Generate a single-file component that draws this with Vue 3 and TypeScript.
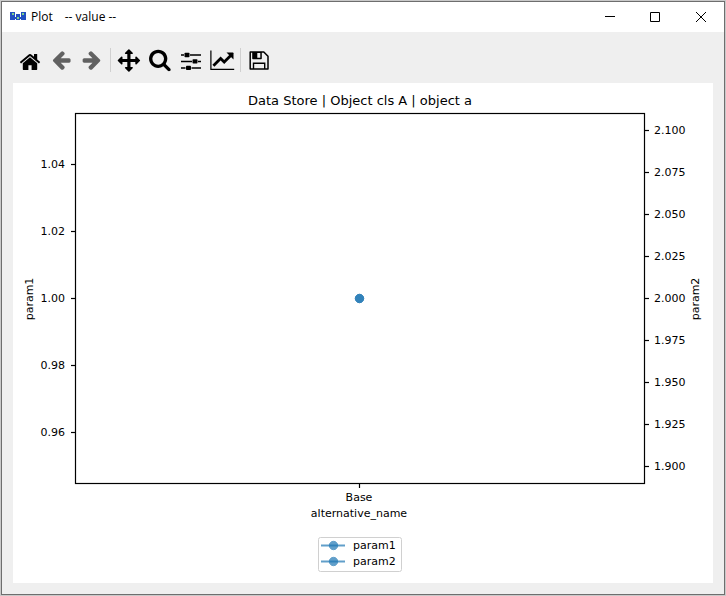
<script setup lang="ts">
interface Tick {
  label: string
  pos: number
}

interface Tool {
  id: string
  label: string
  disabled?: boolean
}

const toolGroups: Tool[][] = [
  [
    { id: 'home', label: 'Home' },
    { id: 'back', label: 'Back', disabled: true },
    { id: 'forward', label: 'Forward', disabled: true },
  ],
  [
    { id: 'pan', label: 'Pan' },
    { id: 'zoom', label: 'Zoom' },
    { id: 'subplots', label: 'Subplots' },
    { id: 'customize', label: 'Customize' },
  ],
  [{ id: 'save', label: 'Save' }],
]

const axes = { left: 62, top: 30, right: 631, bottom: 400 }

function makeTicks(values: number[], digits: number, first: number, step: number): Tick[] {
  return values.map((v, i) => ({ label: v.toFixed(digits), pos: first + i * step }))
}

const leftTicks = makeTicks([1.04, 1.02, 1.0, 0.98, 0.96], 2, 81, 67)
const rightTicks = makeTicks([2.1, 2.075, 2.05, 2.025, 2.0, 1.975, 1.95, 1.925, 1.9], 3, 47, 42)
const series = ['param1', 'param2']
</script>

<template>
  <div class="desktop">
    <main class="window">
      <header class="titlebar">
        <svg class="logo" viewBox="0 0 16 10" aria-hidden="true">
          <path fill="#2250c0" d="M0 0h5v8H0zM6 2h4v6H6zM11 0h5v8h-5zM5 5h1v2H5zM10 5h1v2h-1z" />
          <path fill="#7fd08a" d="M2 1h2v2H2zM7 5h2v2H7zM12 1h2v2h-2z" />
        </svg>
        <h1 class="caption"><span>Plot</span><span>-- value --</span></h1>
        <div class="controls">
          <button type="button" aria-label="Minimize">
            <svg viewBox="0 0 11 11"><path d="M1 4.500h10" /></svg>
          </button>
          <button type="button" aria-label="Maximize">
            <svg viewBox="0 0 11 11"><path d="M.5.5h9v9h-9z" /></svg>
          </button>
          <button type="button" aria-label="Close">
            <svg viewBox="0 0 11 11"><path d="M0 0l10 10M10 0L0 10" /></svg>
          </button>
        </div>
      </header>

      <nav class="toolbar" aria-label="Plot tools">
        <div v-for="(group, g) in toolGroups" :key="g" class="group">
          <button
            v-for="tool in group"
            :key="tool.id"
            type="button"
            class="tool"
            :aria-label="tool.label"
            :disabled="tool.disabled"
          >
            <svg viewBox="0 0 25 25">
              <path
                v-if="tool.id === 'home'"
                transform="translate(1.8 2.8) scale(.0125)"
                d="M1472 992v480q0 26-19 45t-45 19h-384v-384h-256v384h-384q-26 0-45-19t-19-45v-480q0-1 .5-3t.5-3l575-474 575 474q1 2 1 6zm223-69l-62 74q-8 9-21 11h-3q-13 0-21-7l-692-577-692 577q-12 8-24 7-13-2-21-11l-62-74q-8-10-7-23.500t11-21.500l719-599q32-26 76-26t76 26l244 204v-195q0-14 9-23t23-9h192q14 0 23 9t9 23v408l219 182q10 8 11 21.500t-7 23.500z"
              />
              <path
                v-else-if="tool.id === 'back' || tool.id === 'forward'"
                :transform="tool.id === 'back' ? 'translate(2.6 1) scale(.012)' : 'translate(23.6 1) scale(-.012 .012)'"
                d="M1664 896v128q0 53-32.500 90.500t-84.500 37.500h-704l293 294q38 36 38 90t-38 90l-75 76q-37 37-90 37-52 0-91-37l-651-652q-37-37-37-90 0-52 37-91l651-650q38-38 91-38 52 0 90 38l75 74q38 38 38 91t-38 91l-293 293h704q52 0 84.500 37.500t32.500 90.500z"
              />
              <path
                v-else-if="tool.id === 'pan'"
                transform="translate(1.7 1.3) scale(.0125)"
                d="M1792 896q0 26-19 45l-256 256q-19 19-45 19t-45-19-19-45v-128h-384v384h128q26 0 45 19t19 45-19 45l-256 256q-19 19-45 19t-45-19l-256-256q-19-19-19-45t19-45 45-19h128v-384h-384v128q0 26-19 45t-45 19-45-19l-256-256q-19-19-19-45t19-45l256-256q19-19 45-19t45 19 19 45v128h384v-384h-128q-26 0-45-19t-19-45 19-45l256-256q19-19 45-19t45 19l256 256q19 19 19 45t-19 45-45 19h-128v384h384v-128q0-26 19-45t45-19 45 19l256 256q19 19 19 45z"
              />
              <path
                v-else-if="tool.id === 'zoom'"
                transform="translate(1.200 0) scale(.013)"
                d="M1216 832q0-185-131.500-316.500t-316.500-131.500-316.500 131.500-131.500 316.500 131.500 316.500 316.500 131.500 316.500-131.500 131.500-316.500zm512 832q0 52-38 90t-90 38q-54 0-90-38l-343-342q-179 124-399 124-143 0-273.500-55.500t-225-150-150-225-55.500-273.500 55.500-273.500 150-225 225-150 273.500-55.500 273.500 55.500 225 150 150 225 55.500 273.500q0 220-124 399l343 343q37 37 37 90z"
              />
              <g v-else-if="tool.id === 'subplots'">
                <path d="M3 6.300h3v1.500H3zM12 6.300h11v1.500H12zM3 12.700h11v1.500H3zM20 12.700h3v1.500h-3zM3 19.200h4.500v1.500H3zM13.500 19.200H23v1.500h-9.500z" />
                <rect x="6.500" y="4.800" width="5" height="4.400" rx=".8" />
                <rect x="14.500" y="11.200" width="5" height="4.400" rx=".8" />
                <rect x="8" y="17.700" width="5" height="4.400" rx=".8" />
              </g>
              <g v-else-if="tool.id === 'customize'">
                <path d="M1.300 2.500h1.200v18.300h22.700V22H1.300z" />
                <path d="M4.400 17.700l7.200-7.200 3.600 3.600 6.800-6.800" fill="none" stroke="currentColor" stroke-width="2.800" />
                <path d="M17.500 4.500h6.300q.7 0 .7.7v6.300z" />
              </g>
              <g v-else>
                <path
                  d="M4.200 3.900h13.600l4.200 4.400v12.800H4.200z"
                  fill="none"
                  stroke="currentColor"
                  stroke-width="1.500"
                  stroke-linejoin="round"
                />
                <path d="M6.200 4h9.600v6.400q0 .8-.8.8H7q-.8 0-.8-.8zM11.300 5v4.800h3V5z" fill-rule="evenodd" />
                <path d="M7.500 21v-5.800h11.200V21" fill="none" stroke="currentColor" stroke-width="1.400" />
              </g>
            </svg>
          </button>
        </div>
      </nav>

      <svg class="figure" viewBox="0 0 700 500" role="img" aria-label="Data Store | Object cls A | object a">
        <text class="title" x="347" y="22" text-anchor="middle">Data Store | Object cls A | object a</text>

        <g class="axis">
          <rect
            :x="axes.left + 0.5"
            :y="axes.top + 0.5"
            :width="axes.right - axes.left"
            :height="axes.bottom - axes.top"
          />
          <path v-for="t in leftTicks" :key="t.label" :d="`M${axes.left} ${t.pos + 0.5}h-4`" />
          <path v-for="t in rightTicks" :key="t.label" :d="`M${axes.right + 1} ${t.pos + 0.5}h4`" />
          <path :d="`M346.500 ${axes.bottom}v5`" />
        </g>

        <g text-anchor="end">
          <text v-for="t in leftTicks" :key="t.label" :x="52" :y="t.pos + 4">{{ t.label }}</text>
        </g>
        <g>
          <text v-for="t in rightTicks" :key="t.label" :x="641" :y="t.pos + 4">{{ t.label }}</text>
        </g>

        <g text-anchor="middle">
          <text x="346" y="418">Base</text>
          <text x="346" y="434">alternative_name</text>
          <text transform="translate(20 216) rotate(-90)">param1</text>
          <text transform="translate(686 216) rotate(-90)">param2</text>
        </g>

        <circle v-for="s in series" :key="s" class="marker" cx="346.500" cy="215.500" r="4.200" />

        <g transform="translate(305 454)">
          <rect class="legend" x=".5" y=".5" width="83" height="34" rx="2" />
          <g v-for="(s, i) in series" :key="s" :transform="`translate(0 ${i * 16})`">
            <path class="line" d="M3 8.500h24" />
            <circle class="marker" cx="15.500" cy="8.500" r="4.200" />
            <text x="35" y="12">{{ s }}</text>
          </g>
        </g>
      </svg>
    </main>
  </div>
</template>

<style>
body {
  margin: 0;
  background: #c9c9c9;
}
</style>

<style scoped>
.desktop {
  box-sizing: border-box;
  min-height: 100vh;
  padding: 1px;
  background: #c9c9c9;
}

.window {
  display: flex;
  flex-direction: column;
  border: 1px solid #6e6e6e;
  background: #efefef;
}

.titlebar {
  display: flex;
  align-items: center;
  height: 30px;
  padding-left: 8px;
  background: #fff;
}

.logo {
  width: 16px;
  height: 10px;
}

.caption {
  display: flex;
  flex: 1;
  gap: 12px;
  margin: 0 0 0 5px;
  font: 400 12px/16px "Open Sans", "Noto Sans", sans-serif;
  color: #000;
}

.controls {
  display: flex;
  align-self: stretch;
}

button {
  display: flex;
  align-items: center;
  justify-content: center;
  padding: 0;
  border: 0;
  background: none;
  color: #000;
}

.controls button {
  width: 46px;
}

.controls svg {
  width: 11px;
  height: 11px;
  fill: none;
  stroke: #000;
}

.toolbar {
  display: flex;
  padding: 16px 12px 10px;
}

.group {
  display: flex;
}

.group + .group::before {
  content: "";
  width: 1px;
  height: 24px;
  margin: 0 2px 0 3px;
  background: #d0d0d0;
}

.tool {
  width: 31px;
  height: 25px;
}

.tool svg {
  width: 25px;
  height: 25px;
  fill: currentColor;
  overflow: visible;
}

.tool:disabled {
  color: #616161;
}

.figure {
  display: block;
  margin: 0 11px 11px;
  background: #fff;
  font: 11px "DejaVu Sans", sans-serif;
}

.title {
  font-size: 13px;
}

.axis {
  fill: none;
  stroke: #000;
  stroke-width: 1.2;
}

.line {
  stroke: #1f77b4;
  stroke-width: 2;
  opacity: 0.7;
}

.marker {
  fill: #1f77b4;
  stroke: #1f77b4;
  opacity: 0.7;
}

.legend {
  fill: #fff;
  stroke: #d0d0d0;
}
</style>
